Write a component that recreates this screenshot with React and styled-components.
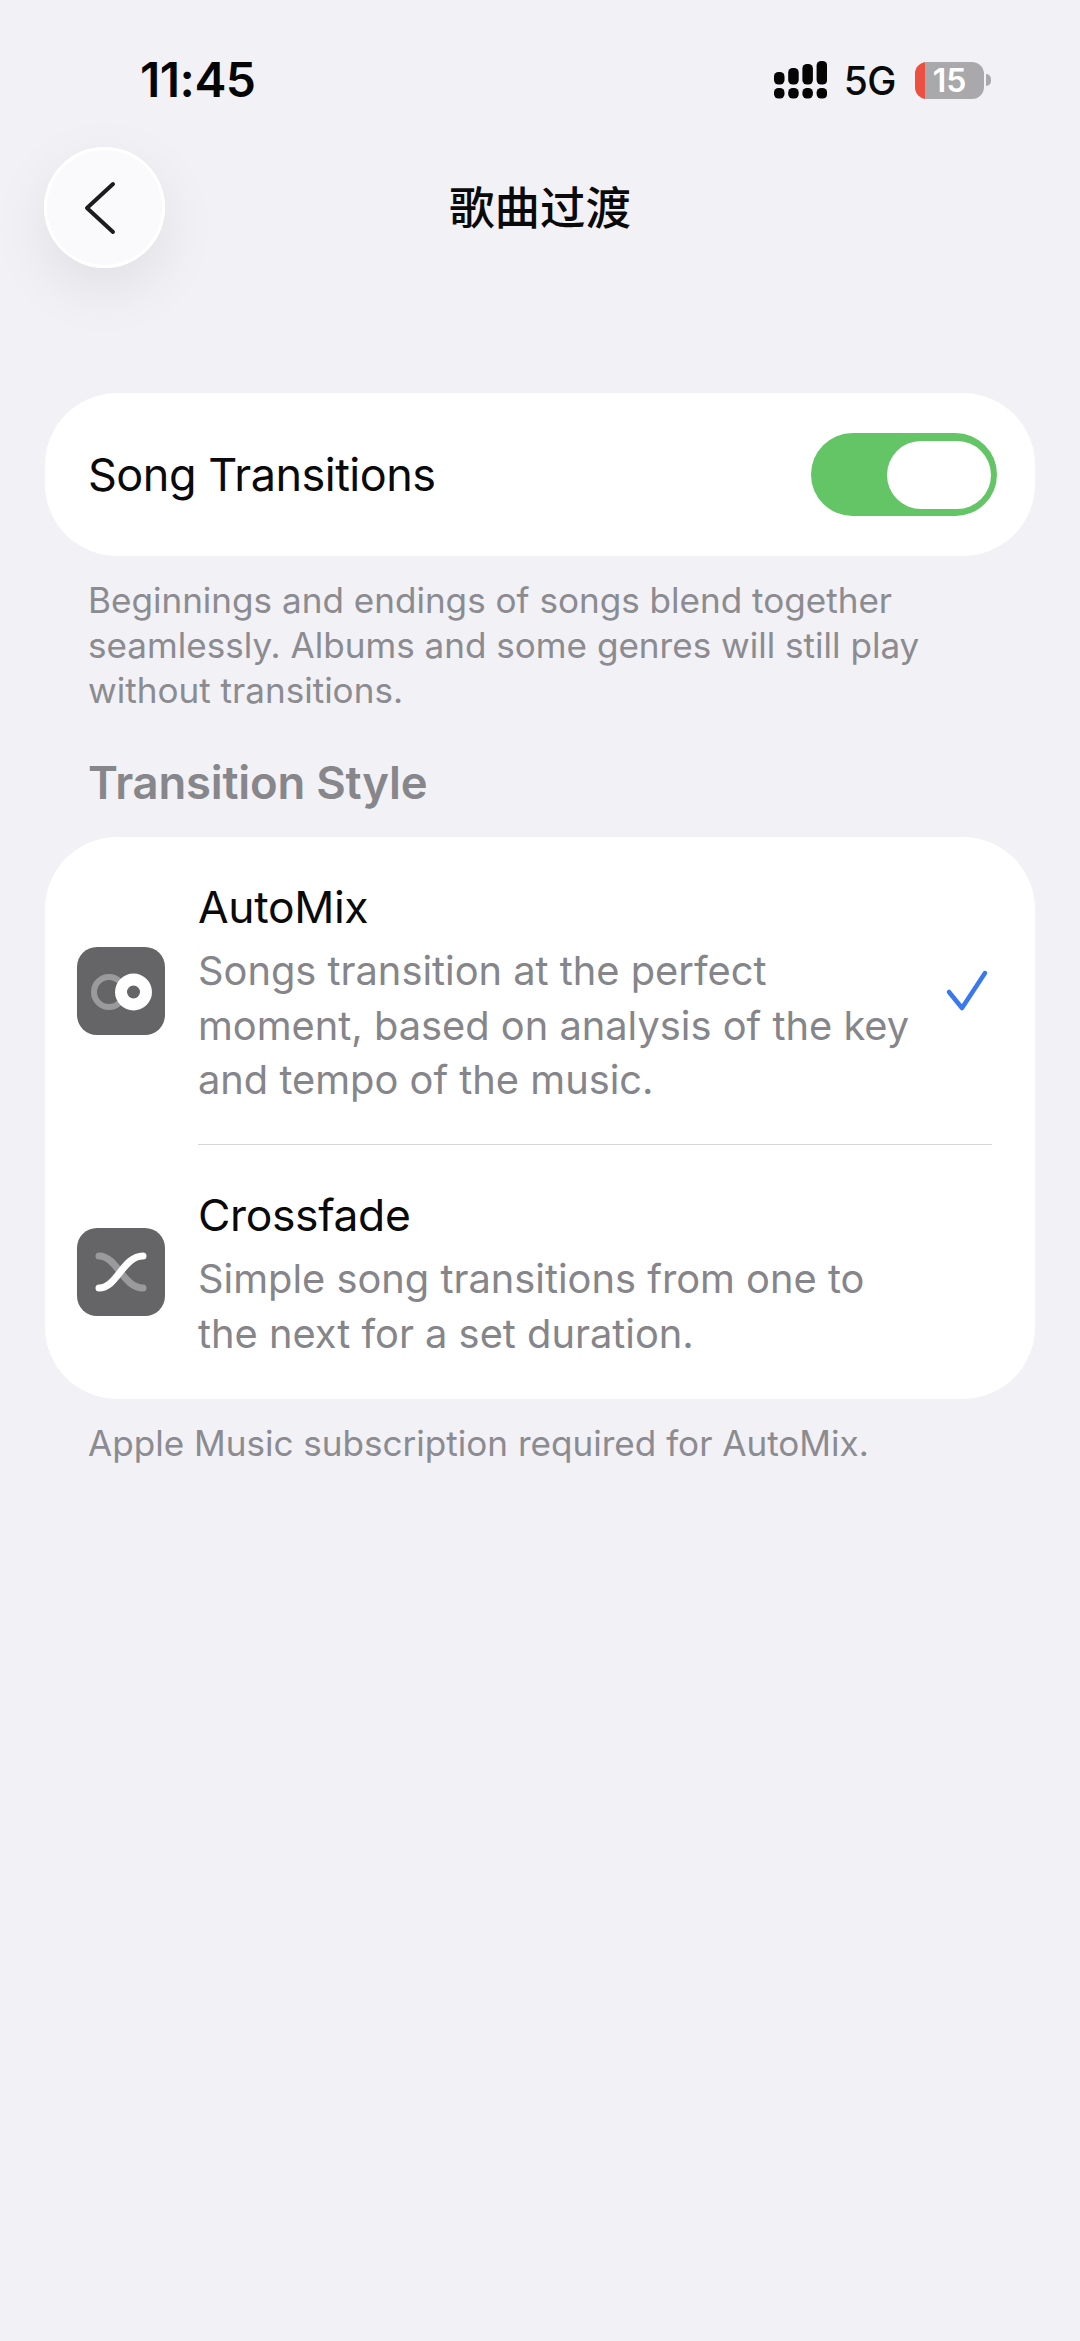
import React from 'react';
import styled, { createGlobalStyle } from 'styled-components';

const Global = createGlobalStyle`
  html, body { margin: 0; padding: 0; background: #f1f1f6; }
  body { font-family: Inter, "Noto Sans CJK SC", sans-serif; -webkit-font-smoothing: antialiased; }
`;
const Page = styled.div`
  width: 1080px; height: 2341px; background: #f1f1f6; overflow: hidden; display: flex; flex-direction: column;
`;
const StatusBar = styled.div`
  height: 147px; box-sizing: border-box; padding: 50px 0 0 140px; display: flex; align-items: flex-start; justify-content: space-between;
`;
const Time = styled.div`
  font-size: 48px; line-height: 60px; font-weight: 600; color: #050505; letter-spacing: -0.5px;
`;
const StatusRight = styled.div`
  display: flex; align-items: center; height: 60px; margin-right: 89px;
`;
const NetLabel = styled.span`
  font-size: 39px; font-weight: 500; color: #0a0a0a; margin: 0 19px 0 17px; letter-spacing: -0.5px;
`;
const Battery = styled.div`
  position: relative; width: 69px; height: 37px; border-radius: 12px; background: #a9a9ab; overflow: hidden;
  display: flex; align-items: center; justify-content: center; color: #fff; font-size: 32px; font-weight: 600; box-sizing: border-box;
`;
const BatteryLevel = styled.span`
  position: relative;
`;
const BatteryLow = styled.div`
  position: absolute; left: 0; top: 0; bottom: 0; width: 10px; background: #ec5040;
`;
const BatteryCap = styled.div`
  width: 5px; height: 12px; margin-left: 2px; background: #a9a9ab; border-radius: 0 5px 5px 0;
`;
const Nav = styled.div`
  display: flex; align-items: center; height: 121px; position: relative; padding-left: 44px;
`;
const BackButton = styled.div`
  width: 121px; height: 121px; border-radius: 50%; background: #fafafc; display: flex; align-items: center; justify-content: center;
  box-shadow: 0 20px 60px rgba(0,0,0,0.08), 0 0 0 3px #fff inset;
`;
const BackIcon = styled.svg`
  margin-right: 9px;
`;
const Title = styled.div`
  position: absolute; left: 0; right: 0; top: 25px; text-align: center; font-size: 45.5px; line-height: 66px; font-weight: 500; color: #0a0a0a;
  font-family: "Noto Sans CJK SC", sans-serif;
`;
const Content = styled.div`
  padding: 125px 45px 0; display: flex; flex-direction: column;
`;
const Card = styled.div`
  background: #fff; border-radius: 72px;
`;
const ToggleRow = styled.div`
  height: 163px; display: flex; align-items: center; justify-content: space-between; padding: 0 38px 0 43px;
`;
const RowLabel = styled.div`
  font-size: 45px; color: #0a0a0a; letter-spacing: -0.5px; line-height: 54px;
`;
const Switch = styled.div`
  width: 186px; height: 83px; border-radius: 42px; background: #63c566; display: flex; justify-content: flex-end; align-items: center; padding-right: 6px; box-sizing: border-box;
`;
const Knob = styled.div`
  width: 104px; height: 68px; border-radius: 34px; background: #fff;
`;
const Footnote = styled.div`
  font-size: 35.1px; line-height: 45px; color: #8b8b90; padding: 0 43px; margin-top: 22px;
`;
const SectionHead = styled.div`
  font-size: 45.4px; font-weight: 600; color: #86868b; padding: 0 43px; margin-top: 42px; line-height: 56px; letter-spacing: -0.2px; margin-bottom: 26px;
`;
const OptionRow = styled.div`
  display: flex; align-items: center; padding-left: 32px; height: ${p => p.$h}px;
`;
const IconTile = styled.div`
  width: 88px; height: 88px; border-radius: 20px; background: #656567; flex: none; display: flex; align-items: center; justify-content: center; margin-top: ${p => p.$top}px;
`;
const OptionBody = styled.div`
  margin-left: 33px; flex: 1; height: 100%; box-sizing: border-box; padding-top: 43px;
  border-bottom: ${p => p.$divider ? '1.5px solid #d6d6d9' : 'none'}; margin-right: 43px; position: relative;
`;
const OptionTitle = styled.div`
  font-size: 44.4px; line-height: 54px; color: #0a0a0a; letter-spacing: -0.35px;
`;
const OptionText = styled.div`
  font-size: 39.8px; line-height: 54.5px; color: #85858a; margin-top: 10px; letter-spacing: 0; white-space: nowrap;
`;
const Check = styled.svg`
  position: absolute; right: 0; top: 130px;
`;

function Signal() {
  const tops = [[0, 11], [1, 7], [2, 3], [3, 0]];
  return (
    <svg width="53" height="38" viewBox="0 0 53 38">
      {tops.map(([i, t]) => (
        <React.Fragment key={i}>
          <rect x={i * 14.2} y={t} width="10.5" height={23.5 - t} rx="4.5" fill="#050505" />
          <rect x={i * 14.2} y="27" width="10.5" height="10.5" rx="4.5" fill="#050505" />
        </React.Fragment>
      ))}
    </svg>
  );
}

export default function App() {
  return (
    <Page>
      <Global />
      <StatusBar>
        <Time>11:45</Time>
        <StatusRight>
          <Signal />
          <NetLabel>5G</NetLabel>
          <Battery><BatteryLow /><BatteryLevel>15</BatteryLevel></Battery>
          <BatteryCap />
        </StatusRight>
      </StatusBar>
      <Nav>
        <BackButton>
          <BackIcon width="32" height="54" viewBox="0 0 32 54" fill="none" stroke="#1c1c1e" strokeWidth="4" strokeLinecap="round" strokeLinejoin="round">
            <path d="M29 3 L3 27 L29 51" />
          </BackIcon>
        </BackButton>
        <Title>歌曲过渡</Title>
      </Nav>
      <Content>
        <Card>
          <ToggleRow>
            <RowLabel>Song Transitions</RowLabel>
            <Switch><Knob /></Switch>
          </ToggleRow>
        </Card>
        <Footnote>Beginnings and endings of songs blend together seamlessly. Albums and some genres will still play without transitions.</Footnote>
        <SectionHead>Transition Style</SectionHead>
        <Card>
          <OptionRow $h={308}>
            <IconTile $top={0}>
              <svg width="88" height="88" viewBox="0 0 88 88" fill="none">
                <circle cx="32" cy="45" r="15" stroke="#9a9a9c" strokeWidth="6" />
                <circle cx="56.5" cy="45" r="18.5" fill="#fff" />
                <circle cx="56.5" cy="45" r="6.5" fill="#656567" />
              </svg>
            </IconTile>
            <OptionBody $divider>
              <OptionTitle>AutoMix</OptionTitle>
              <OptionText>Songs transition at the perfect<br />moment, based on analysis of the key<br />and tempo of the music.</OptionText>
              <Check width="48" height="48" viewBox="0 0 48 48" fill="none" stroke="#3a78ee" strokeWidth="4.5" strokeLinecap="round" strokeLinejoin="round">
                <path d="M5 25 L18 41 L41 6" />
              </Check>
            </OptionBody>
          </OptionRow>
          <OptionRow $h={254}>
            <IconTile $top={-1}>
              <svg width="88" height="88" viewBox="0 0 88 88" fill="none" strokeLinecap="round" strokeWidth="7">
                <path d="M22 28 C40 28 46 60 66 60" stroke="#9a9a9c" />
                <path d="M22 60 C40 60 46 28 66 28" stroke="#fff" />
              </svg>
            </IconTile>
            <OptionBody>
              <OptionTitle>Crossfade</OptionTitle>
              <OptionText>Simple song transitions from one to<br />the next for a set duration.</OptionText>
            </OptionBody>
          </OptionRow>
        </Card>
        <Footnote>Apple Music subscription required for AutoMix.</Footnote>
      </Content>
    </Page>
  );
}
